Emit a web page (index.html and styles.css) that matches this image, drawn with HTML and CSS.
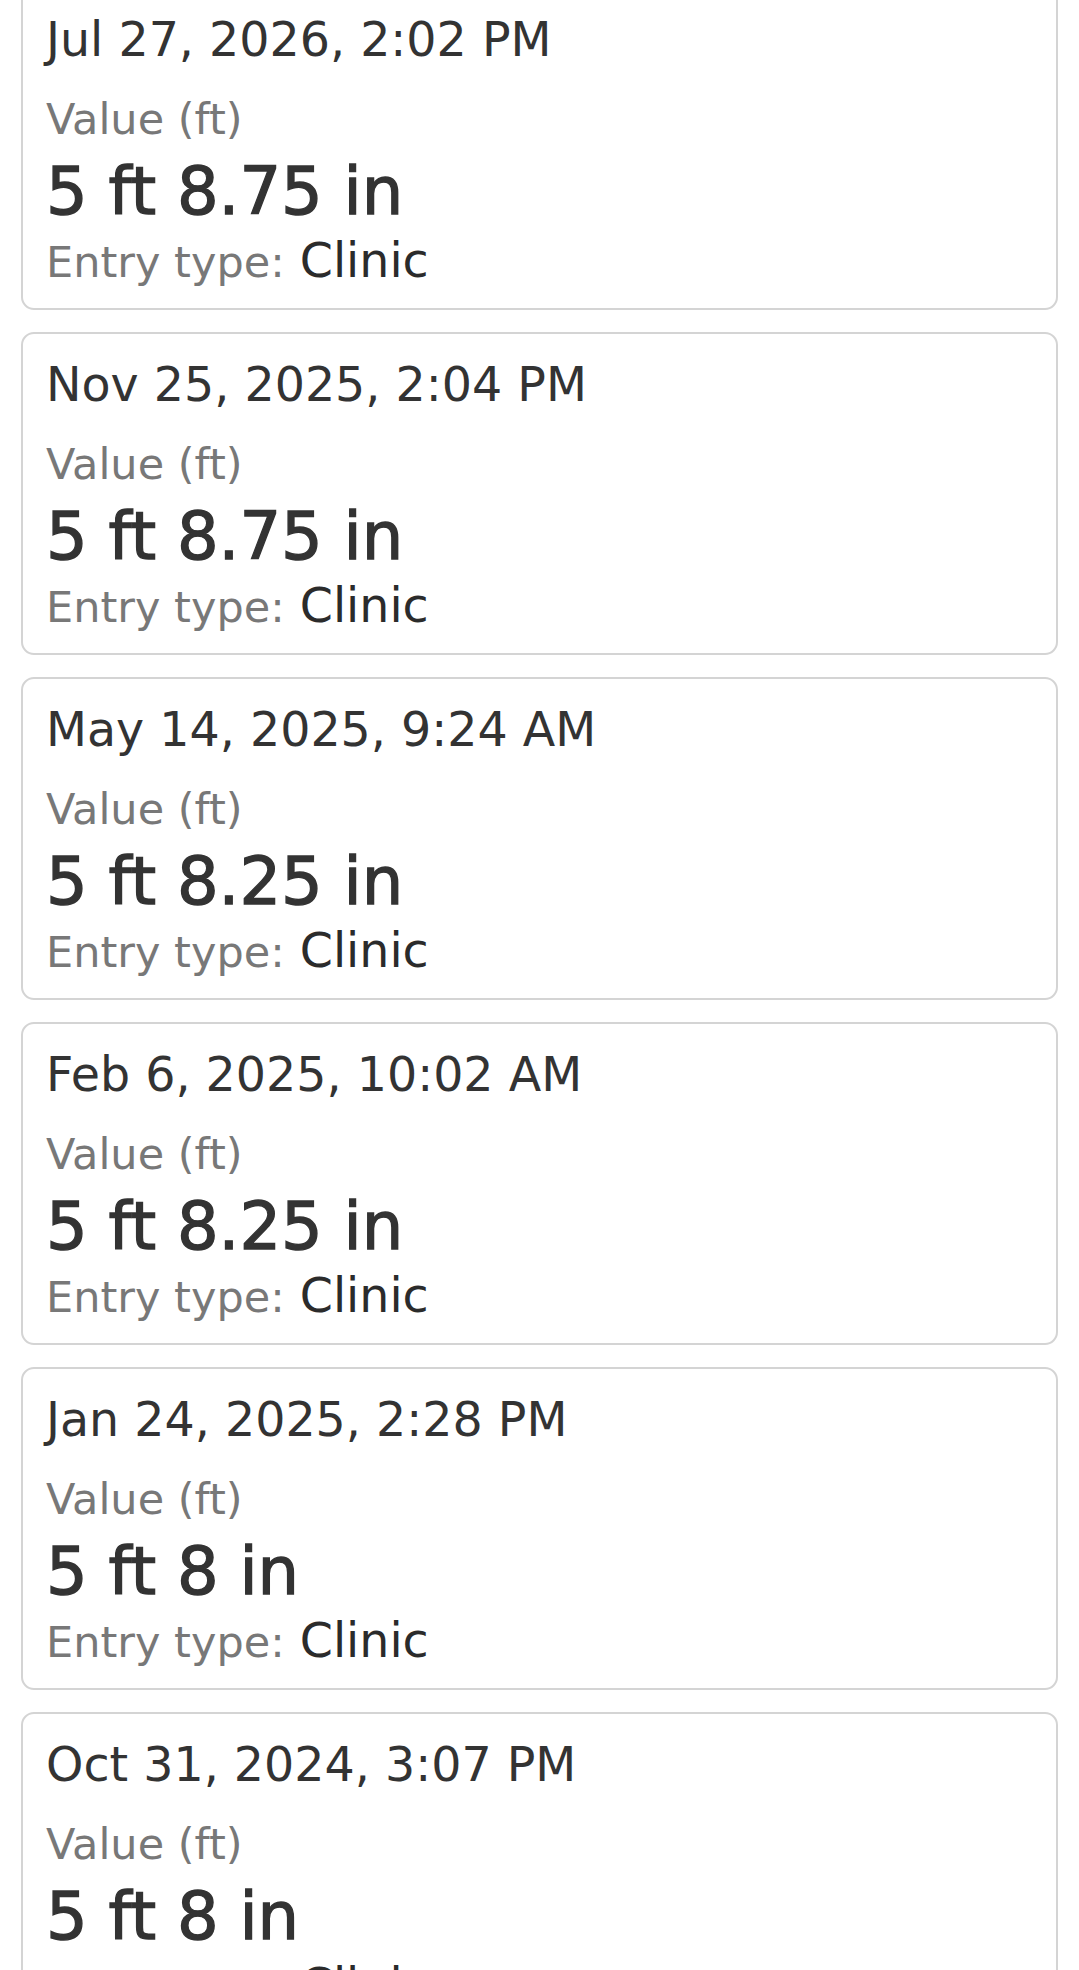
FILE: index.html
```html
<!DOCTYPE html>
<html lang="en">
<head>
<meta charset="utf-8">
<title>Height entries</title>
<link rel="stylesheet" href="styles.css">
</head>
<body>
<div class="list">
  <div class="card">
    <div class="date">Jul 27, 2026, 2:02 PM</div>
    <div class="label">Value (ft)</div>
    <div class="value">5 ft 8.75 in</div>
    <div class="entry"><span class="entry-label">Entry type:</span> <span class="entry-val">Clinic</span></div>
  </div>
  <div class="card">
    <div class="date">Nov 25, 2025, 2:04 PM</div>
    <div class="label">Value (ft)</div>
    <div class="value">5 ft 8.75 in</div>
    <div class="entry"><span class="entry-label">Entry type:</span> <span class="entry-val">Clinic</span></div>
  </div>
  <div class="card">
    <div class="date">May 14, 2025, 9:24 AM</div>
    <div class="label">Value (ft)</div>
    <div class="value">5 ft 8.25 in</div>
    <div class="entry"><span class="entry-label">Entry type:</span> <span class="entry-val">Clinic</span></div>
  </div>
  <div class="card">
    <div class="date">Feb 6, 2025, 10:02 AM</div>
    <div class="label">Value (ft)</div>
    <div class="value">5 ft 8.25 in</div>
    <div class="entry"><span class="entry-label">Entry type:</span> <span class="entry-val">Clinic</span></div>
  </div>
  <div class="card">
    <div class="date">Jan 24, 2025, 2:28 PM</div>
    <div class="label">Value (ft)</div>
    <div class="value">5 ft 8 in</div>
    <div class="entry"><span class="entry-label">Entry type:</span> <span class="entry-val">Clinic</span></div>
  </div>
  <div class="card">
    <div class="date">Oct 31, 2024, 3:07 PM</div>
    <div class="label">Value (ft)</div>
    <div class="value">5 ft 8 in</div>
    <div class="entry"><span class="entry-label">Entry type:</span> <span class="entry-val">Clinic</span></div>
  </div>
</div>
</body>
</html>
```
FILE: styles.css
```css
html, body {
  margin: 0;
  padding: 0;
  background: #ffffff;
}
body {
  font-family: "DejaVu Sans", Verdana, sans-serif;
  color: #333333;
  overflow: hidden;
  height: 1970px;
}
.list {
  display: flex;
  flex-direction: column;
  gap: 22px;
  padding: 0 21px;
  margin-top: -13px;
}
.card {
  box-sizing: border-box;
  height: 323px;
  flex: 0 0 auto;
  border: 2px solid #d4d4d4;
  border-radius: 13px;
  padding: 25px 23px 0 23px;
  display: flex;
  flex-direction: column;
}
.date {
  font-size: 47.5px;
  line-height: 52px;
  color: #333333;
  white-space: nowrap;
}
.label {
  margin-top: 28px;
  font-size: 43px;
  line-height: 50px;
  color: #787878;
  white-space: nowrap;
}
.value {
  margin-top: 9px;
  font-size: 65.5px;
  line-height: 76px;
  color: #333333;
  -webkit-text-stroke: 1.3px #333333;
  white-space: nowrap;
}
.entry {
  margin-top: 6px;
  font-size: 47.5px;
  line-height: 52px;
  white-space: nowrap;
}
.entry-label {
  font-size: 43px;
  color: #787878;
}
.entry-val {
  color: #2b2b2b;
}
```
